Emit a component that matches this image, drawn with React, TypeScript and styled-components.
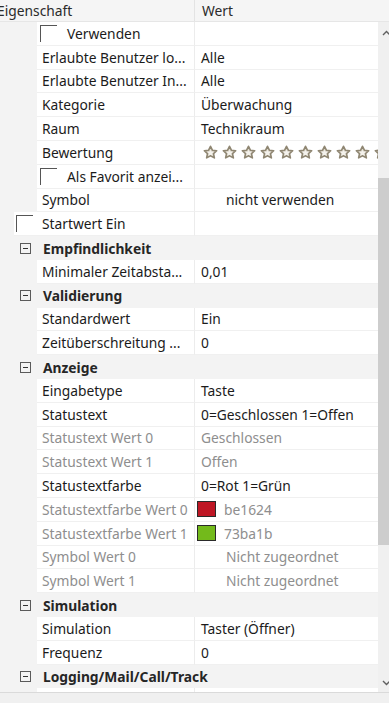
import styled, { createGlobalStyle } from 'styled-components'

const GlobalStyle = createGlobalStyle`
  html, body {
    margin: 0;
    padding: 0;
    overflow: hidden;
    background: #f0f0f0;
  }
  body {
    font-family: "Noto Sans", "Open Sans", sans-serif;
    font-size: 13.8px;
    color: #1b1b1b;
  }
`

const Grid = styled.div`
  width: 395px;
  height: 703px;
  display: flex;
  flex-direction: column;
  background: #f0f0f0;
`

const Header = styled.div`
  height: 22px;
  display: flex;
  background: #f5f5f5;
  border-bottom: 1px solid #e6e6e6;
  box-sizing: border-box;
  flex-shrink: 0;
`

const HeaderCell = styled.div<{ $w?: number }>`
  ${(p) => (p.$w ? `width: ${p.$w}px;` : 'flex: 1;')}
  display: flex;
  align-items: center;
  padding-left: ${(p) => (p.$w ? '0' : '7px')};
  border-right: ${(p) => (p.$w ? '1px solid #e3e3e3' : 'none')};
  box-sizing: border-box;
  color: #2b2b2b;
  white-space: nowrap;
  overflow: hidden;
`

const HeaderText = styled.span`
  margin-left: -3px;
`

const Body = styled.div`
  height: 670px;
  display: flex;
  flex-shrink: 0;
`

const List = styled.div`
  width: 378px;
  overflow: hidden;
  background: #f3f3f3;
`

const Row = styled.div`
  height: 23.8px;
  display: flex;
  box-sizing: border-box;
`

const Gutter = styled.div<{ $indent: number }>`
  width: ${(p) => p.$indent}px;
  flex-shrink: 0;
  background: #f3f3f3;
`

const LabelCell = styled.div<{ $dim?: boolean }>`
  flex: 1;
  display: flex;
  align-items: center;
  padding-left: 5px;
  background: #fff;
  border-bottom: 1px solid #f0f0f0;
  border-right: 1px solid #ececec;
  white-space: nowrap;
  overflow: hidden;
  color: ${(p) => (p.$dim ? '#8e8e8e' : '#1b1b1b')};
`

const ValueCell = styled.div<{ $dim?: boolean; $pad?: number }>`
  width: 183px;
  flex-shrink: 0;
  display: flex;
  align-items: center;
  gap: 8px;
  padding-left: ${(p) => p.$pad ?? 6}px;
  box-sizing: border-box;
  background: #fff;
  border-bottom: 1px solid #f0f0f0;
  white-space: nowrap;
  overflow: hidden;
  color: ${(p) => (p.$dim ? '#8e8e8e' : '#1b1b1b')};
`

const CategoryRow = styled(Row)`
  background: #f3f3f3;
  align-items: center;
  padding-left: 20px;
  gap: 12px;
  white-space: nowrap;
`

const CategoryTitle = styled.span`
  font-weight: 700;
  color: #262626;
`

const Expander = styled.span`
  width: 9px;
  height: 9px;
  border: 1px solid #5a5a5a;
  position: relative;
  flex-shrink: 0;
  &::after {
    content: '';
    position: absolute;
    left: 2px;
    right: 2px;
    top: 4px;
    height: 1px;
    background: #333;
  }
`

const Check = styled.span<{ $shift: number; $gap: number }>`
  width: 17px;
  height: 17px;
  box-sizing: border-box;
  border-top: 1.5px solid #555;
  border-left: 1.5px solid #555;
  margin-left: ${(p) => p.$shift}px;
  margin-right: ${(p) => p.$gap}px;
  flex-shrink: 0;
`

const Swatch = styled.span<{ $c: string }>`
  width: 19px;
  height: 16px;
  box-sizing: border-box;
  border: 1px solid #2a2a2a;
  background: ${(p) => p.$c};
  flex-shrink: 0;
  margin-left: -4px;
`

const Stars = styled.div`
  display: flex;
  gap: 4px;
  padding-left: 2px;
`

const ScrollBar = styled.div`
  width: 17px;
  background: #f0f0f0;
  display: flex;
  flex-direction: column;
  align-items: center;
  padding: 8px 0 6px;
  box-sizing: border-box;
`

const Thumb = styled.div`
  width: 100%;
  height: 367px;
  margin-top: 142px;
  background: #cdcdcd;
`

const Spacer = styled.div`
  flex: 1;
`

const Footer = styled.div`
  flex: 1;
  border-top: 1px solid #dadada;
  background: #f0f0f0;
`

function Star() {
  return (
    <svg width="15" height="15" viewBox="0 0 24 24">
      <path
        d="M12 2l3 6.3 6.9.8-5.1 4.7 1.4 6.8L12 17.2l-6.2 3.4 1.4-6.8-5.1-4.7 6.9-.8z"
        fill="#ddd8cc"
        stroke="#8f8672"
        strokeWidth="2.6"
        strokeLinejoin="round"
      />
      <path d="M12 7.5l1.6 3.3 3.6.4-2.7 2.5.8 3.5L12 15.4l-3.3 1.8.8-3.5-2.7-2.5 3.6-.4z" fill="#f4f2ec" />
    </svg>
  )
}

function Chevron({ down }: { down?: boolean }) {
  return (
    <svg width="9" height="6" viewBox="0 0 9 6">
      <path
        d={down ? 'M1 1l3.5 3.5L8 1' : 'M1 5l3.5-3.5L8 5'}
        fill="none"
        stroke="#606060"
        strokeWidth="1.4"
      />
    </svg>
  )
}

type Prop = {
  label: string
  value?: React.ReactNode
  dim?: boolean
  indent?: number
  check?: boolean
  valuePad?: number
}

function PropRow({ label, value, dim, indent = 37, check, valuePad }: Prop) {
  const nested = indent === 37
  return (
    <Row>
      <Gutter $indent={indent} />
      <LabelCell $dim={dim}>
        {check && <Check $shift={nested ? -2 : -3} $gap={nested ? 10 : 9} />}
        {label}
      </LabelCell>
      <ValueCell $dim={dim} $pad={valuePad}>
        {value}
      </ValueCell>
    </Row>
  )
}

function Category({ title }: { title: string }) {
  return (
    <CategoryRow>
      <Expander />
      <CategoryTitle>{title}</CategoryTitle>
    </CategoryRow>
  )
}

export default function App() {
  return (
    <>
      <GlobalStyle />
      <Grid>
        <Header>
          <HeaderCell $w={195}>
            <HeaderText>Eigenschaft</HeaderText>
          </HeaderCell>
          <HeaderCell>Wert</HeaderCell>
        </Header>
        <Body>
          <List>
            <PropRow label="Verwenden" check />
            <PropRow label="Erlaubte Benutzer lo..." value="Alle" />
            <PropRow label="Erlaubte Benutzer In..." value="Alle" />
            <PropRow label="Kategorie" value="Überwachung" />
            <PropRow label="Raum" value="Technikraum" />
            <PropRow
              label="Bewertung"
              value={
                <Stars>
                  {Array.from({ length: 10 }, (_, i) => (
                    <Star key={i} />
                  ))}
                </Stars>
              }
            />
            <PropRow label="Als Favorit anzei..." check />
            <PropRow label="Symbol" value="nicht verwenden" valuePad={31} />
            <PropRow label="Startwert Ein" check indent={14} />
            <Category title="Empfindlichkeit" />
            <PropRow label="Minimaler Zeitabsta..." value="0,01" />
            <Category title="Validierung" />
            <PropRow label="Standardwert" value="Ein" />
            <PropRow label="Zeitüberschreitung ..." value="0" />
            <Category title="Anzeige" />
            <PropRow label="Eingabetype" value="Taste" />
            <PropRow label="Statustext" value="0=Geschlossen 1=Offen" />
            <PropRow label="Statustext Wert 0" value="Geschlossen" dim />
            <PropRow label="Statustext Wert 1" value="Offen" dim />
            <PropRow label="Statustextfarbe" value="0=Rot 1=Grün" />
            <PropRow
              label="Statustextfarbe Wert 0"
              dim
              value={
                <>
                  <Swatch $c="#be1624" />
                  be1624
                </>
              }
            />
            <PropRow
              label="Statustextfarbe Wert 1"
              dim
              value={
                <>
                  <Swatch $c="#73ba1b" />
                  73ba1b
                </>
              }
            />
            <PropRow label="Symbol Wert 0" value="Nicht zugeordnet" dim valuePad={31} />
            <PropRow label="Symbol Wert 1" value="Nicht zugeordnet" dim valuePad={31} />
            <Category title="Simulation" />
            <PropRow label="Simulation" value="Taster (Öffner)" />
            <PropRow label="Frequenz" value="0" />
            <Category title="Logging/Mail/Call/Track" />
            <PropRow label="" value="" />
          </List>
          <ScrollBar>
            <Chevron />
            <Thumb />
            <Spacer />
            <Chevron down />
          </ScrollBar>
        </Body>
        <Footer />
      </Grid>
    </>
  )
}
